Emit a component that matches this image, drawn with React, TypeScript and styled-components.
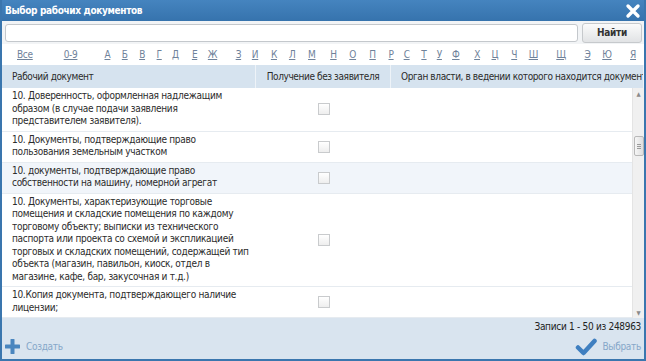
import * as React from 'react';
import styled, { createGlobalStyle } from 'styled-components';

const GlobalStyle = createGlobalStyle`
  html, body {
    margin: 0;
    padding: 0;
    background: #ffffff;
  }
  body {
    font-family: "DejaVu Sans Condensed", "DejaVu Sans", sans-serif;
    font-size: 10px;
    letter-spacing: -0.3px;
    color: #2b2b2b;
  }
`;

const LETTERS = ['Все', '0-9', 'А', 'Б', 'В', 'Г', 'Д', 'Е', 'Ж', 'З', 'И', 'К', 'Л', 'М', 'Н', 'О', 'П', 'Р', 'С', 'Т', 'У', 'Ф', 'Х', 'Ц', 'Ч', 'Ш', 'Щ', 'Э', 'Ю', 'Я'];

// lines are kept as in the source grid so wrapping stays the same
const DOCS = [
  {
    text: '10. Доверенность, оформленная надлежащим\nобразом (в случае подачи заявления\nпредставителем заявителя).',
    hover: false,
  },
  {
    text: '10. Документы, подтверждающие право\nпользования земельным участком',
    hover: false,
  },
  {
    text: '10. документы, подтверждающие право\nсобственности на машину, номерной агрегат',
    hover: true,
  },
  {
    text:
      '10. Документы, характеризующие торговые\nпомещения и складские помещения по каждому\nторговому объекту; выписки из технического\nпаспорта или проекта со схемой и экспликацией\nторговых и складских помещений, содержащей тип\nобъекта (магазин, павильон, киоск, отдел в\nмагазине, кафе, бар, закусочная и т.д.)',
    hover: false,
  },
  {
    text: '10.Копия документа, подтверждающего наличие\nлицензии;',
    hover: false,
  },
];

const COLS = '254px 135px 1fr';

const Window = styled.div`
  width: 646px;
  height: 361px;
  box-sizing: border-box;
  border: 2px solid #3a76ae;
  border-top: none;
  display: flex;
  flex-direction: column;
  overflow: hidden;
  background: #ffffff;
`;

const TitleBar = styled.div`
  height: 21px;
  margin: 0 -2px;
  padding: 0 5px 0 5px;
  display: flex;
  align-items: center;
  justify-content: space-between;
  background: linear-gradient(#4584bf, #3673ad);
  color: #ffffff;
  font-weight: bold;
  letter-spacing: -0.35px;
  flex: none;
`;

const CloseButton = styled.span`
  display: flex;
  width: 16px;
  height: 16px;
`;

const SearchRow = styled.div`
  height: 23px;
  display: flex;
  align-items: center;
  gap: 4px;
  padding: 0 2px 0 3px;
  background: #f2f4f6;
  flex: none;
`;

const SearchInput = styled.div`
  flex: 1;
  height: 16px;
  border: 1px solid #c4c8cc;
  border-radius: 3px;
  background: #ffffff;
`;

const FindButton = styled.div`
  width: 58px;
  height: 18px;
  border: 1px solid #c6c9cc;
  border-radius: 3px;
  background: linear-gradient(#fbfbfb, #e1e3e5);
  display: flex;
  align-items: center;
  justify-content: center;
  font-weight: bold;
  color: #333;
`;

const LettersBar = styled.div`
  height: 21px;
  padding-left: 15px;
  background: #ffffff;
  flex: none;
  display: flex;
`;

const LettersTable = styled.table`
  width: calc(100% + 4px);
  flex: none;
  border-collapse: collapse;
  td {
    padding: 0;
    text-align: left;
  }
`;

const Letter = styled.a`
  color: #6f829a;
  text-decoration: underline;
`;

const HeaderRow = styled.div`
  height: 23px;
  display: grid;
  grid-template-columns: ${COLS};
  background: #d6e3ef;
  flex: none;
  letter-spacing: -0.4px;
`;

const HeadCell = styled.div<{ $center?: boolean }>`
  display: flex;
  align-items: center;
  justify-content: ${(p) => (p.$center ? 'center' : 'flex-start')};
  padding-left: ${(p) => (p.$center ? '0' : '10px')};
  border-right: 1px solid #eef3f8;
  white-space: nowrap;
  overflow: hidden;
  color: #2b2b2b;
`;

const BodyArea = styled.div`
  height: 230px;
  display: flex;
  flex: none;
`;

const Rows = styled.div`
  flex: 1;
  overflow: hidden;
`;

const Row = styled.div<{ $hover?: boolean }>`
  display: grid;
  grid-template-columns: ${COLS};
  background: ${(p) => (p.$hover ? '#f1f5fa' : '#ffffff')};
  border-bottom: 1px solid #e6ebf0;
`;

const DocCell = styled.div`
  padding: 2px 4px 3px 10px;
  white-space: pre;
  line-height: 12.5px;
  color: #2b2b2b;
`;

const CheckCell = styled.div`
  display: flex;
  align-items: center;
  justify-content: center;
`;

const CheckBox = styled.span`
  width: 10px;
  height: 10px;
  border: 1px solid #c9cbcd;
  background: linear-gradient(#ffffff, #eeeeee);
`;

const ScrollBar = styled.div`
  width: 11px;
  background: #f0f0f0;
  border-left: 1px solid #e4e4e4;
  display: flex;
  flex-direction: column;
  align-items: center;
`;

const ScrollArrow = styled.div`
  height: 11px;
  width: 11px;
  display: flex;
  align-items: center;
  justify-content: center;
  color: #8a8a8a;
  font-size: 6px;
`;

const ScrollTrack = styled.div`
  flex: 1;
  width: 100%;
  display: flex;
  flex-direction: column;
  align-items: center;
  padding-top: 37px;
`;

const Thumb = styled.div`
  width: 8px;
  height: 18px;
  border: 1px solid #b8b8b8;
  border-radius: 2px;
  background: linear-gradient(90deg, #f6f6f6, #dedede);
  display: flex;
  flex-direction: column;
  align-items: center;
  justify-content: center;
  gap: 1px;
  span {
    width: 4px;
    height: 1px;
    background: #9a9a9a;
  }
`;

const Footer = styled.div`
  flex: 1;
  min-height: 0;
  background: #d9e4ef;
  display: flex;
  flex-direction: column;
  padding: 2px 3px 0 3px;
`;

const Paging = styled.div`
  text-align: right;
  color: #222;
  height: 14px;
  line-height: 14px;
`;

const Actions = styled.div`
  flex: 1;
  display: flex;
  align-items: center;
  justify-content: space-between;
`;

const Action = styled.div`
  display: flex;
  align-items: center;
  gap: 6px;
  color: #86a7c9;
  line-height: 14px;
`;

function CloseIcon() {
  return (
    <svg width="16" height="16" viewBox="0 0 16 16">
      <path d="M3 3 L13 13 M13 3 L3 13" stroke="#ffffff" strokeWidth="3.4" strokeLinecap="round" />
    </svg>
  );
}

function PlusIcon() {
  return (
    <svg width="15" height="15" viewBox="0 0 15 15">
      <path d="M7.5 1 V14 M1 7.5 H14" stroke="#4a86bf" strokeWidth="4" strokeLinecap="round" />
    </svg>
  );
}

function CheckIcon() {
  return (
    <svg width="22" height="18" viewBox="0 0 22 18">
      <path d="M3 9.5 L8.5 15 L19.5 3" fill="none" stroke="#3f7fc0" strokeWidth="4.5" strokeLinecap="round" strokeLinejoin="round" />
    </svg>
  );
}

export default function App() {
  return (
    <>
      <GlobalStyle />
      <Window>
        <TitleBar>
          <span>Выбор рабочих документов</span>
          <CloseButton>
            <CloseIcon />
          </CloseButton>
        </TitleBar>
        <SearchRow>
          <SearchInput />
          <FindButton>Найти</FindButton>
        </SearchRow>
        <LettersBar>
          <LettersTable>
            <tbody>
              <tr>
                {LETTERS.map((l) => (
                  <td key={l}>
                    <Letter>{l}</Letter>
                  </td>
                ))}
              </tr>
            </tbody>
          </LettersTable>
        </LettersBar>
        <HeaderRow>
          <HeadCell>Рабочий документ</HeadCell>
          <HeadCell $center>Получение без заявителя</HeadCell>
          <HeadCell>Орган власти, в ведении которого находится документ</HeadCell>
        </HeaderRow>
        <BodyArea>
          <Rows>
            {DOCS.map((d, i) => (
              <Row key={i} $hover={d.hover}>
                <DocCell>{d.text}</DocCell>
                <CheckCell>
                  <CheckBox />
                </CheckCell>
                <div />
              </Row>
            ))}
          </Rows>
          <ScrollBar>
            <ScrollArrow>▲</ScrollArrow>
            <ScrollTrack>
              <Thumb>
                <span />
                <span />
                <span />
              </Thumb>
            </ScrollTrack>
            <ScrollArrow>▼</ScrollArrow>
          </ScrollBar>
        </BodyArea>
        <Footer>
          <Paging>Записи 1 - 50 из 248963</Paging>
          <Actions>
            <Action>
              <PlusIcon />
              Создать
            </Action>
            <Action>
              <CheckIcon />
              Выбрать
            </Action>
          </Actions>
        </Footer>
      </Window>
    </>
  );
}
